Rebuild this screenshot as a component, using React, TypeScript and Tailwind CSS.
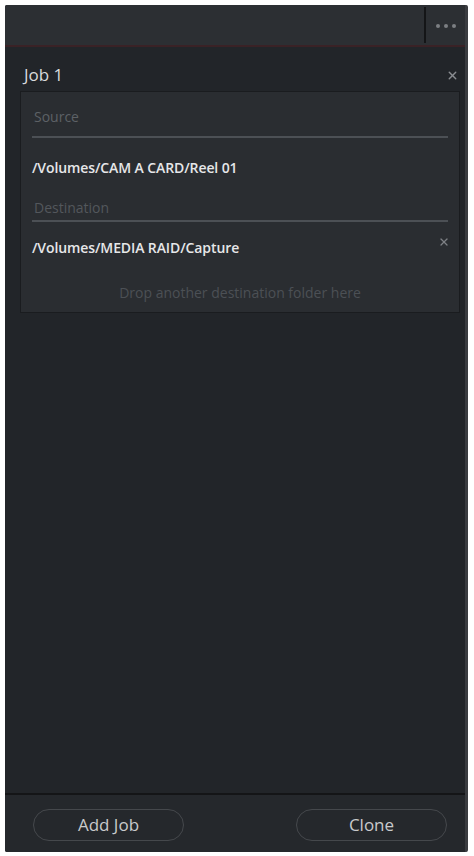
import { X } from 'lucide-react';

export default function App() {
  return (
    <div className="w-[474px] h-[856px] bg-white p-[5px] pr-[6px] pb-[4px] font-['Open_Sans',sans-serif]">
      <div className="h-full flex flex-col bg-[#222529] border-r-[3px] border-[#3a3c40] rounded-[2px] overflow-hidden">
        {/* Top bar */}
        <div className="h-[42px] flex bg-[#2c2f33] border-b-2 border-[#3a2226]">
          <div className="flex-1" />
          <div className="w-[2px] my-[2px] bg-[#141517]" />
          <div className="w-[39px] flex items-center justify-center gap-[4px] pt-[1px]">
            <span className="w-[4px] h-[4px] rounded-full bg-[#7c7f83]" />
            <span className="w-[4px] h-[4px] rounded-full bg-[#7c7f83]" />
            <span className="w-[4px] h-[4px] rounded-full bg-[#7c7f83]" />
          </div>
        </div>

        {/* Job */}
        <div className="flex-1 pl-[15px] pr-[5px] pt-[19px]">
          <div className="flex items-center justify-between pl-[4px] pr-[1px]">
            <span className="text-[17px] text-[#d9dadc] leading-none">Job 1</span>
            <X size={13} strokeWidth={2.5} className="text-[#8a8d91] mt-[2px]" />
          </div>

          <div className="mt-[8px] bg-[#2a2d31] border border-[#1a1c1f] px-[11px] pt-[18px] pb-[12px]">
            <div className="text-[14px] text-[#5d6166] leading-none pl-[2px]">Source</div>
            <div className="mt-[12px] h-[2px] bg-[#4c5055]" />
            <div className="mt-[23px] text-[14px] font-semibold tracking-[-0.1px] text-[#e6e7e9] leading-none">/Volumes/CAM A CARD/Reel 01</div>
            <div className="mt-[26px] text-[14px] text-[#53575c] leading-none pl-[2px]">Destination</div>
            <div className="mt-[5px] h-[2px] bg-[#4c5055]" />
            <div className="mt-[14px] flex items-start justify-between">
              <span className="pt-[5px] text-[14px] font-semibold tracking-[-0.1px] text-[#e6e7e9] leading-none">/Volumes/MEDIA RAID/Capture</span>
              <X size={12} strokeWidth={2.5} className="text-[#7d8085] -mr-[2px]" />
            </div>
            <div className="mt-[31px] text-center text-[14px] text-[#4c5055] leading-none">Drop another destination folder here</div>
          </div>
        </div>

        {/* Bottom bar */}
        <div className="h-[59px] bg-[#25282c] border-t-2 border-[#141517] flex items-center justify-between pl-[28px] pr-[18px] pt-[3px]">
          <button className="w-[151px] h-[32px] rounded-full border border-[#45484c] text-[17px] text-[#c9cacc]">Add Job</button>
          <button className="w-[151px] h-[32px] rounded-full border border-[#45484c] text-[17px] text-[#c9cacc]">Clone</button>
        </div>
      </div>
    </div>
  );
}
